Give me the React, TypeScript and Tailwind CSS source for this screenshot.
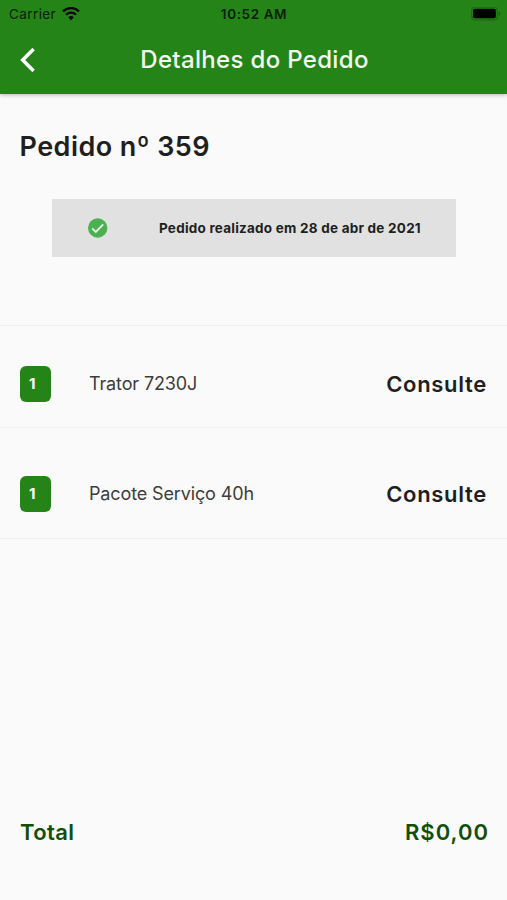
import React from 'react';

type Item = {
  id: number;
  quantity: number;
  name: string;
  price: string;
};

const items: Item[] = [
  { id: 1, quantity: 1, name: 'Trator 7230J', price: 'Consulte' },
  { id: 2, quantity: 1, name: 'Pacote Serviço 40h', price: 'Consulte' },
];

const StatusBar = () => (
  <div className="grid h-[27px] grid-cols-3 items-center pl-[9px] pr-[6px] text-[13.5px] text-[#071e04]">
    <div className="flex items-center gap-[6px]">
      <span className="pt-px tracking-[0.4px]">Carrier</span>
      <svg width="18" height="14" viewBox="0 0 18 14" fill="none" stroke="#020a01">
        <path d="M1 4.4a11.4 11.4 0 0 1 16 0" strokeWidth="2.5" />
        <path d="M4 7.7a7.1 7.1 0 0 1 10 0" strokeWidth="2.2" />
        <path d="M9 13.2 6.2 10.3a4 4 0 0 1 5.6 0z" fill="#020a01" stroke="none" />
      </svg>
    </div>
    <span className="-ml-[2px] pt-px text-center font-semibold tracking-[0.6px]">10:52 AM</span>
    <svg className="justify-self-end" width="30" height="14" viewBox="0 0 30 14">
      <rect x="0.7" y="0.2" width="25.6" height="12.6" rx="3.4" fill="none" stroke="#1b6a12" strokeWidth="1.2" />
      <rect x="2" y="1.8" width="22.8" height="9.4" rx="1.8" fill="#000" />
      <path d="M27.6 4.3a2.3 2.3 0 0 1 0 4.4z" fill="#176010" />
    </svg>
  </div>
);

const App = () => {
  return (
    <div className="flex h-[900px] w-full flex-col bg-[#fafafa] font-['Inter',sans-serif] text-[#1f1f1f]">
      <header className="h-[94px] shrink-0 bg-[#258418] shadow-[0_1px_4px_rgba(0,0,0,0.28)]">
        <StatusBar />
        <div className="grid h-[66px] grid-cols-[60px_1fr_60px] items-center">
          <button className="pl-[20px]" aria-label="Voltar">
            <svg width="16" height="24" viewBox="0 0 16 24" fill="none" stroke="#fff" strokeWidth="3.6">
              <path d="M13.6 1.1 2.7 12l10.9 10.9" />
            </svg>
          </button>
          <h1 className="pl-[2px] text-center text-[24px] font-medium tracking-[0.33px] whitespace-nowrap text-[#f3faf1]">
            Detalhes do Pedido
          </h1>
        </div>
      </header>

      <main className="flex flex-1 flex-col">
        <h2 className="mt-[35px] pl-[19.5px] text-[27px] leading-[36px] font-semibold tracking-[0.45px]">Pedido nº 359</h2>

        {/* Order status */}
        <div className="ml-[52px] mt-[34px] flex h-[58px] w-[404px] items-center bg-[#e1e1e1]">
          <svg className="ml-[35px]" width="21" height="21" viewBox="0 0 21 21">
            <circle cx="10.7" cy="10" r="9.7" fill="#4caf50" />
            <path d="m5.2 10.3 3.6 3.6 7.4-7.6" fill="none" stroke="#e7f4e7" strokeWidth="1.8" />
          </svg>
          <span className="ml-[51px] pt-px text-[13.5px] font-bold tracking-[0.23px] whitespace-nowrap">
            Pedido realizado em 28 de abr de 2021
          </span>
        </div>

        {/* Items */}
        <ul className="mt-[68px] border-t border-[#f1f1f1]">
          {items.map((item) => (
            <li
              key={item.id}
              className="flex h-[102px] items-center border-b border-[#f1f1f1] px-[20px] pt-[15px] last:h-[111px] last:pt-[21px]"
            >
              <span className="flex h-[36px] w-[31px] items-center rounded-[6px] bg-[#258418] pt-px pl-[9px] text-[15px] font-bold text-white">
                {item.quantity}
              </span>
              <span className="ml-[38px] pb-px text-[18px] tracking-[-0.13px] text-[#3d3d3d]">{item.name}</span>
              <span className="ml-auto pt-px text-[22px] font-semibold tracking-[0.7px]">{item.price}</span>
            </li>
          ))}
        </ul>

        <footer className="mt-auto mb-[52px] flex justify-between pr-[18px] pl-[20px] text-[22px] leading-[32px] font-semibold text-[#124e08]">
          <span className="tracking-[0.4px]">Total</span>
          <span className="tracking-[1px]">R$0,00</span>
        </footer>
      </main>
    </div>
  );
};

export default App;
